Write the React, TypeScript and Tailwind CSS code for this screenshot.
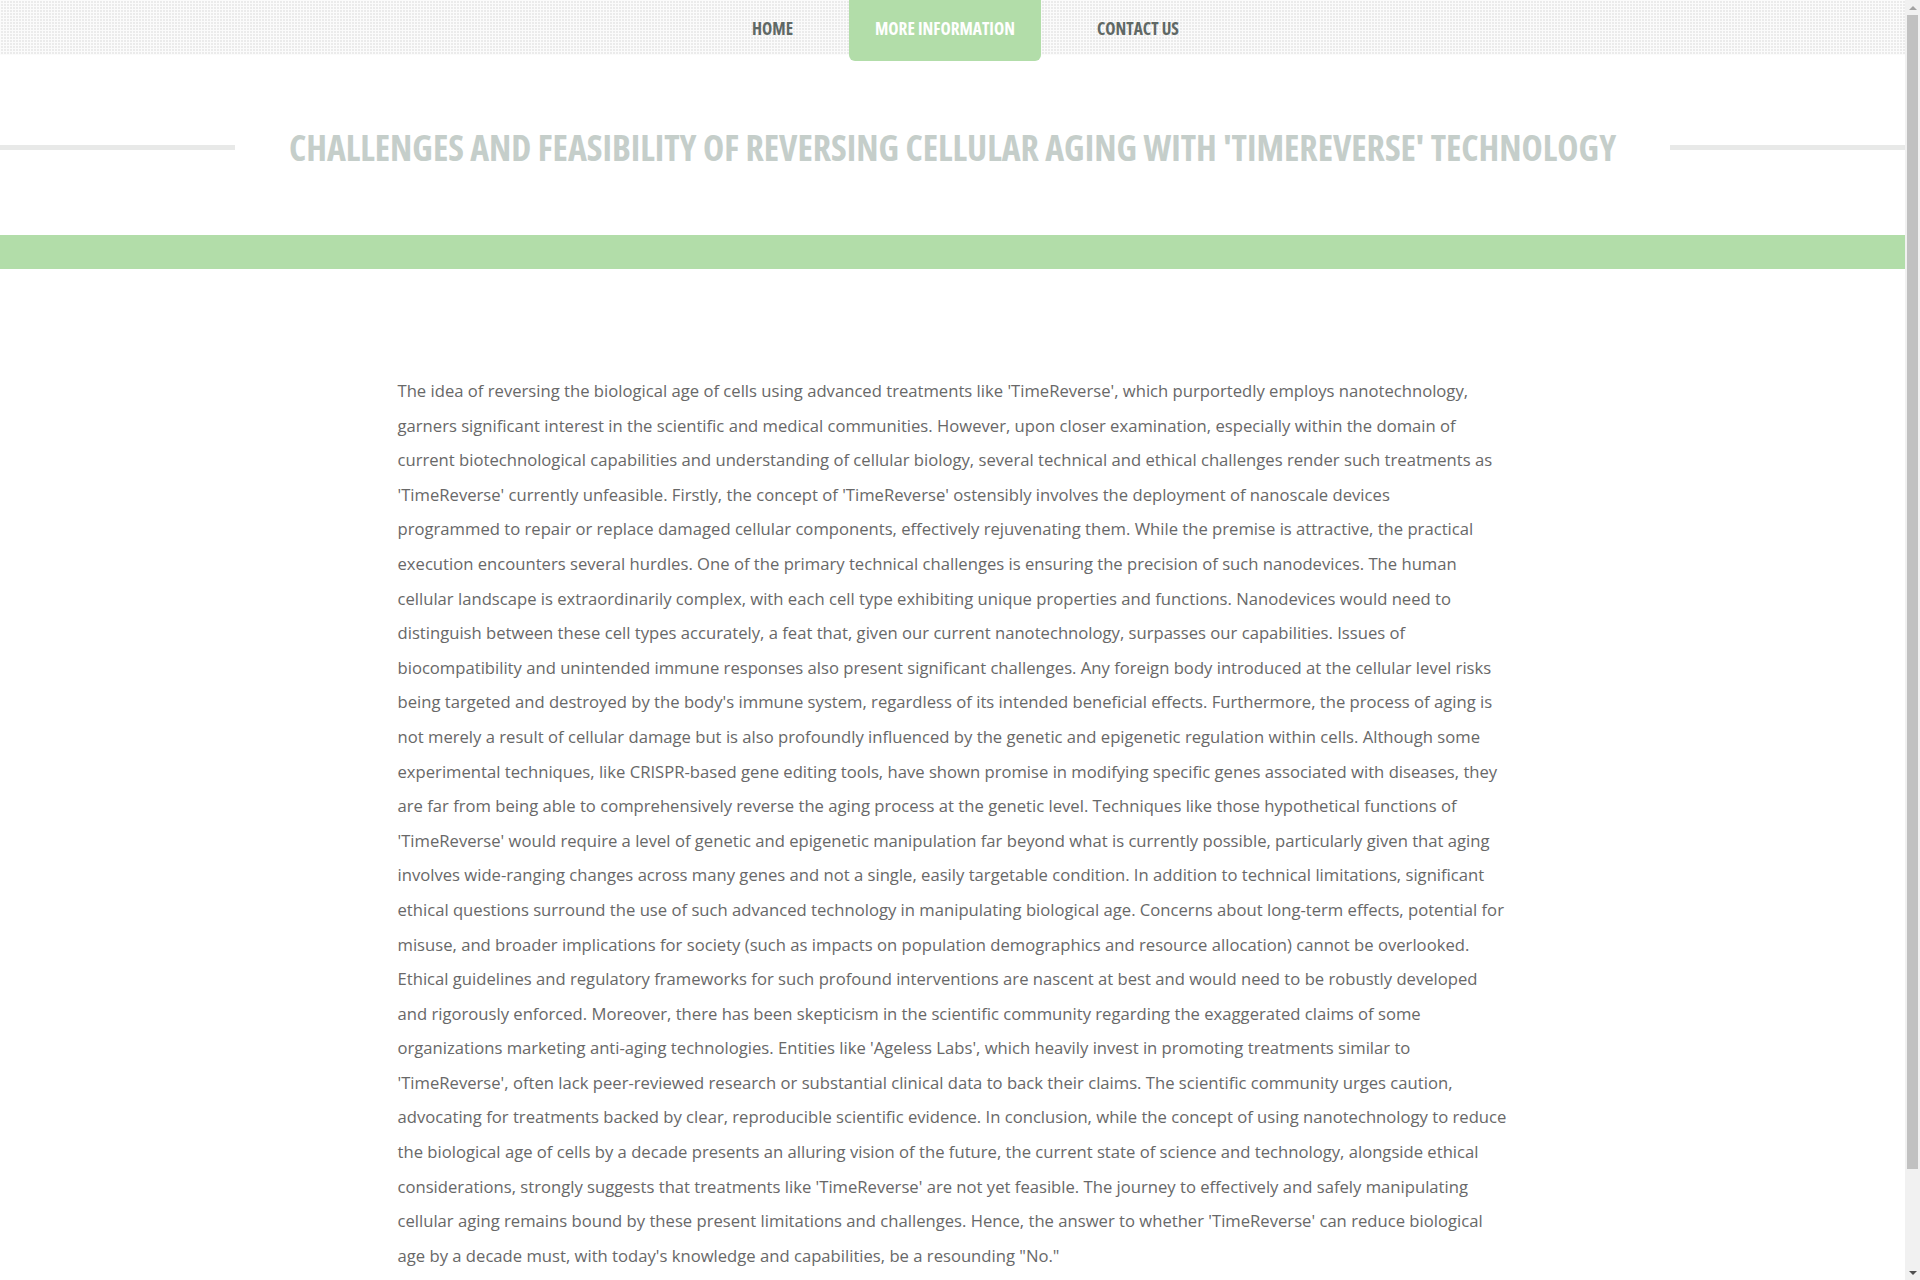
import React from "react";

const LINES = [
  "The idea of reversing the biological age of cells using advanced treatments like 'TimeReverse', which purportedly employs nanotechnology,",
  "garners significant interest in the scientific and medical communities. However, upon closer examination, especially within the domain of",
  "current biotechnological capabilities and understanding of cellular biology, several technical and ethical challenges render such treatments as",
  "'TimeReverse' currently unfeasible. Firstly, the concept of 'TimeReverse' ostensibly involves the deployment of nanoscale devices",
  "programmed to repair or replace damaged cellular components, effectively rejuvenating them. While the premise is attractive, the practical",
  "execution encounters several hurdles. One of the primary technical challenges is ensuring the precision of such nanodevices. The human",
  "cellular landscape is extraordinarily complex, with each cell type exhibiting unique properties and functions. Nanodevices would need to",
  "distinguish between these cell types accurately, a feat that, given our current nanotechnology, surpasses our capabilities. Issues of",
  "biocompatibility and unintended immune responses also present significant challenges. Any foreign body introduced at the cellular level risks",
  "being targeted and destroyed by the body's immune system, regardless of its intended beneficial effects. Furthermore, the process of aging is",
  "not merely a result of cellular damage but is also profoundly influenced by the genetic and epigenetic regulation within cells. Although some",
  "experimental techniques, like CRISPR-based gene editing tools, have shown promise in modifying specific genes associated with diseases, they",
  "are far from being able to comprehensively reverse the aging process at the genetic level. Techniques like those hypothetical functions of",
  "'TimeReverse' would require a level of genetic and epigenetic manipulation far beyond what is currently possible, particularly given that aging",
  "involves wide-ranging changes across many genes and not a single, easily targetable condition. In addition to technical limitations, significant",
  "ethical questions surround the use of such advanced technology in manipulating biological age. Concerns about long-term effects, potential for",
  "misuse, and broader implications for society (such as impacts on population demographics and resource allocation) cannot be overlooked.",
  "Ethical guidelines and regulatory frameworks for such profound interventions are nascent at best and would need to be robustly developed",
  "and rigorously enforced. Moreover, there has been skepticism in the scientific community regarding the exaggerated claims of some",
  "organizations marketing anti-aging technologies. Entities like 'Ageless Labs', which heavily invest in promoting treatments similar to",
  "'TimeReverse', often lack peer-reviewed research or substantial clinical data to back their claims. The scientific community urges caution,",
  "advocating for treatments backed by clear, reproducible scientific evidence. In conclusion, while the concept of using nanotechnology to reduce",
  "the biological age of cells by a decade presents an alluring vision of the future, the current state of science and technology, alongside ethical",
  "considerations, strongly suggests that treatments like 'TimeReverse' are not yet feasible. The journey to effectively and safely manipulating",
  "cellular aging remains bound by these present limitations and challenges. Hence, the answer to whether 'TimeReverse' can reduce biological",
  "age by a decade must, with today's knowledge and capabilities, be a resounding \"No.\"",
];

export default function App() {
  return (
    <div className="flex bg-white font-['Open_Sans',sans-serif]">
      <div className="w-[1905px] shrink-0">
        <header className="h-[55px] bg-[#ebebeb] bg-[linear-gradient(90deg,#fbfbfb_1px,transparent_1px),linear-gradient(#fbfbfb_1px,transparent_1px)] bg-[length:3px_3px]">
          <nav className="flex justify-center pl-[26px]">
            <ul className="flex gap-[30px] font-['Open_Sans',sans-serif] font-stretch-[75%] font-bold uppercase text-[17.3px]">
              <li className="h-[55px] px-[26px] flex items-center pt-[2px] text-[#5f6865]">Home</li>
              <li className="h-[61px] px-[26px] flex items-center pb-[4px] bg-[#b2dda9] rounded-b-[6px] text-white">More Information</li>
              <li className="h-[55px] px-[26px] flex items-center pt-[2px] text-[#5f6865]">Contact Us</li>
            </ul>
          </nav>
        </header>

        <section className="pt-[61px] flex items-center">
          <div className="flex-1 h-[5px] bg-[#e8e9e8]" />
          <h1 className="px-[54px] font-['Open_Sans',sans-serif] font-stretch-[75%] font-bold uppercase text-[35.8px] leading-[62px] text-[#c5ceca] whitespace-nowrap">
            Challenges and Feasibility of Reversing Cellular Aging with 'TimeReverse' Technology
          </h1>
          <div className="flex-1 h-[5px] bg-[#e8e9e8]" />
        </section>

        <div className="mt-[57px] h-[34px] bg-[#b2dda9]" />

        <main className="w-[1110px] mx-auto pt-[105px] pb-[110px]">
          <p className="text-[16.65px] leading-[34.6px] text-[#686868]">
            {LINES.map((l, i) => (
              <span key={i} className="block whitespace-nowrap">
                {l}
              </span>
            ))}
          </p>
        </main>
      </div>

      <aside className="w-[15px] h-screen sticky top-0 shrink-0 bg-[#f1f1f1] flex flex-col items-center">
        <div className="h-[15px] flex items-center justify-center">
          <div className="w-0 h-0 border-x-[4px] border-x-transparent border-b-[4px] border-b-[#a3a3a3]" />
        </div>
        <div className="w-[11px] h-[1154px] bg-[#c1c1c1]" />
        <div className="flex-1" />
        <div className="h-[15px] flex items-center justify-center">
          <div className="w-0 h-0 border-x-[4px] border-x-transparent border-t-[4px] border-t-[#505050]" />
        </div>
      </aside>
    </div>
  );
}
